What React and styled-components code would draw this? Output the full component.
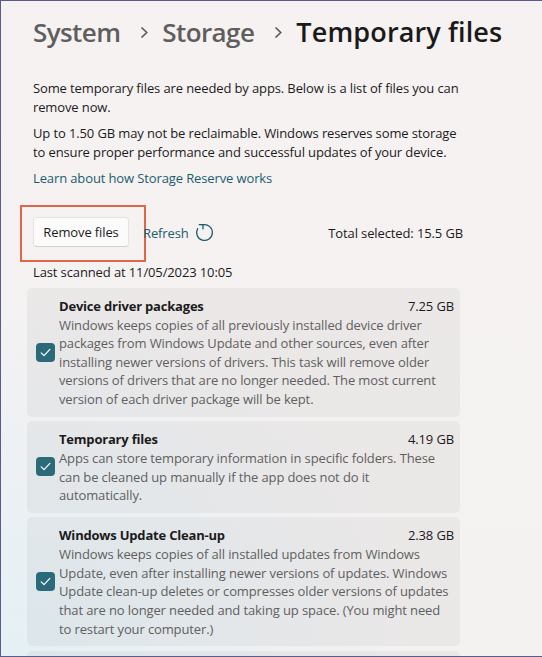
import React from "react";
import styled, { createGlobalStyle } from "styled-components";

const GlobalStyle = createGlobalStyle`
  html, body { margin: 0; padding: 0; width: 542px; height: 657px; overflow: hidden; }
  body { font-family: "Open Sans", "Noto Sans", sans-serif; color: #1b1b1b; }
  * { box-sizing: border-box; }
`;

const Window = styled.div`
  width: 542px;
  height: 657px;
  overflow: hidden;
  border-top: 1px solid #585c88;
  border-left: 1px solid #585c88;
  border-bottom: 1px solid #585c88;
  background:
    radial-gradient(ellipse 420px 380px at 0% 100%, rgba(226, 240, 246, 0.85), rgba(226, 240, 246, 0) 100%),
    linear-gradient(180deg, #f6f2f2 0%, #f4f1f1 100%);
`;

const Content = styled.div`
  width: 462px;
  padding: 12.5px 0 0 32px;
  display: flex;
  flex-direction: column;
`;

const Breadcrumb = styled.div`
  display: flex;
  align-items: center;
  height: 36px;
`;

const Crumb = styled.span`
  font-size: ${(p) => (p.$muted ? "26px" : "27px")};
  font-weight: 600;
  line-height: 36px;
  letter-spacing: ${(p) => (p.$muted ? "-0.6px" : "0.15px")};
  color: ${(p) => (p.$muted ? "#5e5e5e" : "#1a1a1a")};
  white-space: nowrap;
`;

const ChevronSvg = styled.svg`
  width: 7px;
  height: 11px;
  margin: 2px 14px 0 21px;
  flex: none;
`;

const Chevron = () => (
  <ChevronSvg viewBox="0 0 7 11">
    <path d="M1 1 L5.8 5.5 L1 10" fill="none" stroke="#565656" strokeWidth="1.7" strokeLinecap="round" strokeLinejoin="round" />
  </ChevronSvg>
);

const Intro = styled.div`
  margin-top: 29.5px;
  display: flex;
  flex-direction: column;
  gap: 7.8px;
`;

const Text = styled.p`
  margin: 0;
  font-size: 13px;
  line-height: 18.6px;
  letter-spacing: -0.12px;
  color: ${(p) => p.$color || "#1b1b1b"};
`;

const LinkRow = styled.div`
  margin-top: -1px;
  line-height: 18.6px;
`;

const LinkText = styled.a`
  font-size: 13px;
  letter-spacing: -0.12px;
  color: #1c5c6f;
  text-decoration: none;
`;

const Toolbar = styled.div`
  margin-top: 29px;
  display: flex;
  align-items: center;
  height: 30px;
`;

const ButtonWrap = styled.div`
  position: relative;
  display: flex;
`;

const Button = styled.button`
  width: 96px;
  height: 30px;
  padding: 0;
  border: 1px solid #e3e3e3;
  border-bottom-color: #d2d2d2;
  border-radius: 4px;
  background: #fbfbfb;
  font-family: inherit;
  font-size: 13px;
  letter-spacing: -0.12px;
  color: #1b1b1b;
`;

const Highlight = styled.div`
  position: absolute;
  left: -13px;
  top: -12px;
  width: 126px;
  height: 57px;
  border: 2.5px solid #e0654b;
  pointer-events: none;
`;

const RefreshLink = styled.div`
  margin-left: 14px;
  display: flex;
  align-items: center;
  gap: 6px;
  font-size: 13px;
  letter-spacing: -0.12px;
  color: #1c5c6f;
  position: relative;
  top: 1px;
`;

const IconSvg = styled.svg`
  width: 19px;
  height: 19px;
  flex: none;
`;

const RefreshIcon = () => (
  <IconSvg viewBox="0 0 20 20">
    <path d="M8.56 1.83 A8.3 8.3 0 1 1 2.81 5.85" fill="none" stroke="#1c5c6f" strokeWidth="1.35" strokeLinecap="round" />
    <path d="M4.4 1.7 L8.56 1.83 L8.3 6.2" fill="none" stroke="#1c5c6f" strokeWidth="1.35" strokeLinecap="round" strokeLinejoin="round" />
  </IconSvg>
);

const Total = styled.div`
  margin-left: auto;
  font-size: 13px;
  letter-spacing: -0.12px;
  color: #1b1b1b;
  position: relative;
  top: 1px;
`;

const Scanned = styled(Text)`
  margin-top: 16.6px;
`;

const List = styled.div`
  margin-top: 5.8px;
  margin-left: -6px;
  width: 433px;
  display: flex;
  flex-direction: column;
  gap: 4.5px;
`;

const Card = styled.div`
  display: grid;
  grid-template-columns: 19px 1fr;
  column-gap: 4px;
  align-items: center;
  padding: 8px 6px 8px 9px;
  border-radius: 5px;
  background: rgba(0, 0, 0, 0.04);
`;

const Box = styled.div`
  width: 19px;
  height: 19px;
  border-radius: 4px;
  background: #2b6a78;
  display: flex;
  align-items: center;
  justify-content: center;
`;

const Check = () => (
  <Box>
    <svg width="13" height="13" viewBox="0 0 13 13">
      <path d="M2.2 6.9 L5 9.6 L10.9 3.4" fill="none" stroke="#ffffff" strokeWidth="1.2" strokeLinecap="round" strokeLinejoin="round" />
    </svg>
  </Box>
);

const CardBody = styled.div`
  display: flex;
  flex-direction: column;
  min-width: 0;
`;

const TitleRow = styled.div`
  display: flex;
  justify-content: space-between;
  align-items: baseline;
  line-height: 20px;
`;

const Title = styled.span`
  font-size: 13px;
  font-weight: 700;
  letter-spacing: -0.2px;
  color: #1b1b1b;
`;

const Size = styled.span`
  font-size: 13px;
  letter-spacing: -0.12px;
  color: #1b1b1b;
`;

const Desc = styled(Text)`
  color: #5f5f5f;
  padding-right: 3px;
`;

const items = [
  {
    title: "Device driver packages",
    size: "7.25 GB",
    desc: "Windows keeps copies of all previously installed device driver packages from Windows Update and other sources, even after installing newer versions of drivers. This task will remove older versions of drivers that are no longer needed. The most current version of each driver package will be kept.",
  },
  {
    title: "Temporary files",
    size: "4.19 GB",
    desc: "Apps can store temporary information in specific folders. These can be cleaned up manually if the app does not do it automatically.",
  },
  {
    title: "Windows Update Clean-up",
    size: "2.38 GB",
    desc: "Windows keeps copies of all installed updates from Windows Update, even after installing newer versions of updates. Windows Update clean-up deletes or compresses older versions of updates that are no longer needed and taking up space. (You might need to restart your computer.)",
  },
  {
    title: "Delivery Optimisation Files",
    size: "1.02 GB",
    desc: "Delivery Optimisation is used to download updates from Microsoft. These files are stored in a dedicated cache and can be deleted if unused.",
  },
];

export default function App() {
  return (
    <>
      <GlobalStyle />
      <Window>
        <Content>
          <Breadcrumb>
            <Crumb $muted>System</Crumb>
            <Chevron />
            <Crumb $muted>Storage</Crumb>
            <Chevron />
            <Crumb>Temporary files</Crumb>
          </Breadcrumb>
          <Intro>
            <Text>Some temporary files are needed by apps. Below is a list of files you can remove now.</Text>
            <Text>Up to 1.50 GB may not be reclaimable. Windows reserves some storage to ensure proper performance and successful updates of your device.</Text>
            <LinkRow>
              <LinkText href="#">Learn about how Storage Reserve works</LinkText>
            </LinkRow>
          </Intro>
          <Toolbar>
            <ButtonWrap>
              <Button>Remove files</Button>
              <Highlight />
            </ButtonWrap>
            <RefreshLink>
              Refresh
              <RefreshIcon />
            </RefreshLink>
            <Total>Total selected: 15.5 GB</Total>
          </Toolbar>
          <Scanned>Last scanned at 11/05/2023 10:05</Scanned>
          <List>
            {items.map((it) => (
              <Card key={it.title}>
                <Check />
                <CardBody>
                  <TitleRow>
                    <Title>{it.title}</Title>
                    <Size>{it.size}</Size>
                  </TitleRow>
                  <Desc>{it.desc}</Desc>
                </CardBody>
              </Card>
            ))}
          </List>
        </Content>
      </Window>
    </>
  );
}
